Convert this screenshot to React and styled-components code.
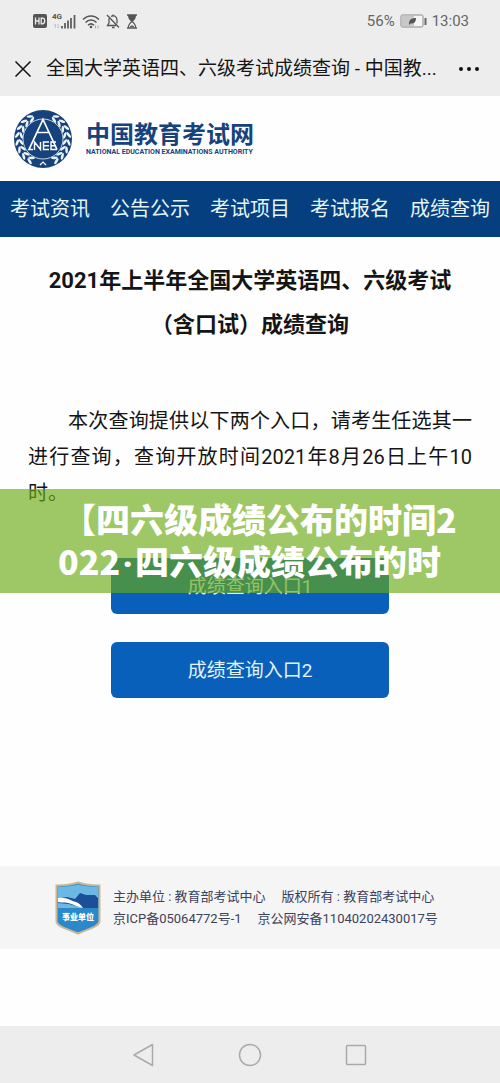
import React from "react";
import styled, { createGlobalStyle } from "styled-components";

const navLinks = ["考试资讯", "公告公示", "考试项目", "考试报名", "成绩查询"];
const entries = ["成绩查询入口1", "成绩查询入口2"];
const leafAngles = [30, 47, 64, 81, 98, 115, 132, 149];

const SignalIcons = () => (
    <Icons>
        <svg width="14" height="14" viewBox="0 0 14 14">
            <rect width="14" height="14" rx="2" fill="#555" />
            <path d="M2.5 3.5v7M6 3.5v7M2.5 7H6M8.2 4.2v5.6h1.2c1.6 0 2.3-1 2.3-2.8s-.7-2.8-2.3-2.8z" fill="none" stroke="#eee" strokeWidth="1.3" />
        </svg>
        <Signal>
            <Network>4G</Network>
            <svg width="23" height="15" viewBox="0 0 23 15">
                <path d="M2.5 10v4M1 11.5 2.5 10M5 10v4l1.3-1.500" fill="none" stroke="#c4c4c4" />
                <path d="M9 12v2.500M12 9v5.500M15 6.500v8M18 4v10.500M21.500 1v13.500" stroke="#5e5e5e" strokeWidth="1.800" />
            </svg>
        </Signal>
        <svg width="18" height="15" viewBox="0 0 18 15" fill="none" stroke="#555" strokeWidth="1.500">
            <path d="M1 5.500c4.500-4.800 11.500-4.800 16 0M3.500 8.500c3-3.300 8-3.300 11 0M6 11.300c1.800-1.800 4.200-1.800 6 0" />
            <circle cx="9" cy="13" r="1.300" fill="#555" stroke="none" />
            <path d="M13.500 11.500v3M16 11.500v3" stroke="#aaa" strokeWidth="1" />
        </svg>
        <svg width="14" height="15" viewBox="0 0 14 15" fill="none" stroke="#555" strokeWidth="1.300">
            <path d="M1 1l12 12.500M5 2.500c3-1.800 6 0 6 3.500v3.500M3 4.500V9l-1.500 2.500H10M6 13.500h2.500M7 .5v1.500" />
        </svg>
        <svg width="12" height="15" viewBox="0 0 12 15">
            <path d="M1 1h10M1 14h10" stroke="#555" strokeWidth="1.600" />
            <path d="M2 1h8c0 3-1 4.500-3 6.500H5C3 5.500 2 4 2 1z" fill="#555" />
            <path d="M2.300 14c0-3 1-4.500 3.700-6.500C8.700 9.500 9.700 11 9.700 14" fill="none" stroke="#555" strokeWidth="1.200" />
            <path d="M4 13c0-2 4-2 4 0z" fill="#555" />
        </svg>
    </Icons>
);

const BatteryIcon = () => (
    <svg width="27" height="14" viewBox="0 0 27 14">
        <rect x="1" y="1" width="22" height="12" rx="1.500" fill="#f4f4f4" stroke="#888" />
        <rect x="2" y="2" width="12" height="10" fill="#c8c8c8" />
        <path d="M9 10c0-4 2-6 7-6 0 4-2 6-5.500 5.500L9 11z" fill="#555" />
        <path d="M25.500 4v7" stroke="#666" strokeWidth="2" />
    </svg>
);

const Emblem = () => (
    <svg width="58" height="58" viewBox="0 0 58 58">
        <circle cx="29" cy="29" r="29" fill="#16427d" />
        {leafAngles.map((angle) => (
            <g key={angle} fill="#eef4f8">
                {[angle, -angle].map((a) => (
                    <g key={a} transform={`rotate(${a} 29 29)`}>
                        <ellipse cx="29" cy="3" rx="3.400" ry="1.300" transform={`rotate(${a > 0 ? -28 : 28} 29 3)`} />
                        <ellipse cx="29" cy="7" rx="3.400" ry="1.300" transform={`rotate(${a > 0 ? 28 : -28} 29 7)`} />
                    </g>
                ))}
            </g>
        ))}
        <circle cx="29" cy="29" r="20" fill="#16427d" stroke="#c5d4e2" strokeWidth="1" />
        <g fill="none" stroke="#fff">
            <path d="M19 39.500h-4L29 9.500l14 30M23.500 22.500h11" strokeWidth="1.700" />
            <path d="M20.500 40v-8l6 7.500V32M35 32h-5.500v7.500H35M29.500 35.700H35M42 32h-5v7.500h6M37 35.700h5" strokeWidth="1.400" />
            <path d="M26 55l3-3 3 3" strokeWidth="1.200" />
        </g>
    </svg>
);

const Shield = () => (
    <svg width="46" height="54" viewBox="0 0 46 54">
        <path d="M1.500 4.500C9 4.500 17 3.500 23 1.500c6 2 14 3 21.500 3V40c0 6-12 8-21.500 12.500C13.500 48 1.500 46 1.500 40z" fill="#2b88c9" stroke="#c9b995" strokeWidth="2" />
        <path d="M3 6c8 0 15-1 20-2.500C28 5 35 6 43 6v21H3z" fill="#6bb8e5" />
        <path d="M3 17.500 12 16l8 2 5-6 6 2 9 0 3 3v10H28L14 23 3 22z" fill="#1c4f97" />
        <path d="M3 17c9-1 13 3 18 4 3 1 5 3 7 6-6-1-10-4-15-5-4-1-7 0-10-1z" fill="#fff" />
        <text x="23" y="39" textAnchor="middle" fill="#fff" fontSize="8" fontWeight="900">事业单位</text>
    </svg>
);

const App = () => {
    return (
        <Page>
            <GlobalStyle />
            <Top>
                <StatusBar>
                    <SignalIcons />
                    <Power>
                        56%
                        <BatteryIcon />
                        13:03
                    </Power>
                </StatusBar>
                <TitleBar>
                    <IconButton aria-label="关闭">
                        <svg width="16" height="16" viewBox="0 0 16 16">
                            <path d="M.5.5l15 15M15.500.5l-15 15" stroke="#111" strokeWidth="1.500" />
                        </svg>
                    </IconButton>
                    <PageName>全国大学英语四、六级考试成绩查询 - 中国教...</PageName>
                    <IconButton aria-label="更多">
                        <svg width="22" height="6" viewBox="0 0 22 6" fill="#111">
                            <circle cx="3" cy="3" r="2" />
                            <circle cx="11" cy="3" r="2" />
                            <circle cx="19" cy="3" r="2" />
                        </svg>
                    </IconButton>
                </TitleBar>
            </Top>
            <Brand>
                <Emblem />
                <BrandText>
                    <BrandName>中国教育考试网</BrandName>
                    <BrandEnglish>NATIONAL EDUCATION EXAMINATIONS AUTHORITY</BrandEnglish>
                </BrandText>
            </Brand>
            <Nav>
                {navLinks.map((name) => (
                    <NavLink href="#" key={name}>{name}</NavLink>
                ))}
            </Nav>
            <Main>
                <Title>2021年上半年全国大学英语四、六级考试<br />（含口试）成绩查询</Title>
                <Notice>本次查询提供以下两个入口，请考生任选其一进行查询，查询开放时间2021年8月26日上午10时。</Notice>
                <Entries>
                    {entries.map((name) => (
                        <EntryButton key={name}>{name}</EntryButton>
                    ))}
                </Entries>
                <Banner>
                    <BannerLine $first>【四六级成绩公布的时间2</BannerLine>
                    <BannerLine>022<Dot>·</Dot>四六级成绩公布的时</BannerLine>
                </Banner>
            </Main>
            <Footer>
                <Shield />
                <FooterText>
                    <FooterRow>
                        <span>主办单位 : 教育部考试中心</span>
                        <span>版权所有 : 教育部考试中心</span>
                    </FooterRow>
                    <FooterRow>
                        <span>京ICP备05064772号-1</span>
                        <span>京公网安备11040202430017号</span>
                    </FooterRow>
                </FooterText>
            </Footer>
            <SystemNav>
                <IconButton aria-label="返回">
                    <svg width="24" height="24" viewBox="0 0 24 24" fill="none" stroke="#aaa" strokeWidth="1.500" strokeLinejoin="round">
                        <path d="M20.500 1.500v21L2 12z" />
                    </svg>
                </IconButton>
                <IconButton aria-label="主页">
                    <svg width="24" height="24" viewBox="0 0 24 24" fill="none" stroke="#aaa" strokeWidth="1.500">
                        <circle cx="12" cy="12" r="10.500" />
                    </svg>
                </IconButton>
                <IconButton aria-label="最近任务">
                    <svg width="24" height="24" viewBox="0 0 24 24" fill="none" stroke="#aaa" strokeWidth="1.500">
                        <rect x="2.500" y="2.500" width="19" height="19" rx="1" />
                    </svg>
                </IconButton>
            </SystemNav>
        </Page>
    );
};

export default App;

const GlobalStyle = createGlobalStyle`
    * {
        box-sizing: border-box;
    }
    body {
        margin: 0;
        background: #fefefe;
        color: #151515;
        font-family: Roboto, "Noto Sans CJK SC", sans-serif;
    }
    button {
        padding: 0;
        border: 0;
        background: none;
        font-family: inherit;
    }
    svg {
        display: block;
        flex: none;
    }
`;
const Page = styled.div`
    display: flex;
    flex-direction: column;
    min-height: 100vh;
`;
const Top = styled.header`
    background: #ededed;
`;
const StatusBar = styled.div`
    display: flex;
    align-items: center;
    justify-content: space-between;
    height: 42px;
    padding: 0 31px 0 33px;
`;
const Icons = styled.div`
    display: flex;
    align-items: center;
    gap: 6px;
`;
const Signal = styled.div`
    position: relative;
`;
const Network = styled.span`
    position: absolute;
    top: -1px;
    left: -1px;
    color: #555;
    font-size: 8px;
    font-weight: 700;
    line-height: 8px;
`;
const Power = styled.div`
    display: flex;
    align-items: center;
    gap: 5px;
    color: #666;
    font-size: 15px;
    line-height: 20px;
`;
const TitleBar = styled.div`
    display: flex;
    align-items: center;
    height: 54px;
    padding: 0 20px 0 15px;
`;
const IconButton = styled.button`
    display: flex;
    align-items: center;
    justify-content: center;
`;
const PageName = styled.div`
    flex: 1;
    padding-left: 15px;
    font-size: 19px;
    line-height: 28px;
    white-space: nowrap;
`;
const Brand = styled.div`
    display: flex;
    align-items: center;
    gap: 14px;
    height: 85px;
    padding: 0 14px;
`;
const BrandText = styled.div`
    color: #16427d;
`;
const BrandName = styled.div`
    font-family: "Noto Sans CJK SC", sans-serif;
    font-size: 24px;
    font-weight: 700;
    line-height: 24px;
`;
const BrandEnglish = styled.div`
    padding-top: 2px;
    font-family: Roboto, sans-serif;
    font-size: 7px;
    font-weight: 700;
    line-height: 10px;
    white-space: nowrap;
`;
const Nav = styled.nav`
    display: flex;
    justify-content: space-between;
    padding: 0 10px;
    background: #053f80;
`;
const NavLink = styled.a`
    color: #e6f4f6;
    font-size: 20px;
    line-height: 56px;
    text-decoration: none;
`;
const Main = styled.main`
    position: relative;
    flex: 1;
    padding-top: 22px;
`;
const Title = styled.h1`
    margin: 0;
    font-size: 22px;
    font-weight: 700;
    line-height: 44px;
    text-align: center;
`;
const Notice = styled.p`
    margin: 56px 28px 0;
    font-size: 20px;
    line-height: 36px;
    text-align: justify;
    text-indent: 2em;
`;
const Entries = styled.div`
    display: flex;
    flex-direction: column;
    align-items: center;
    gap: 28px;
    margin: 47px 0 160px;
`;
const EntryButton = styled.button`
    width: 278px;
    height: 56px;
    padding-bottom: 4px;
    border-radius: 6px;
    background: #0860bb;
    color: #e4f3f8;
    font-size: 19px;
`;
const Banner = styled.div`
    position: absolute;
    top: 252px;
    left: 0;
    right: 0;
    padding: 9px 0 11px 58px;
    background: rgba(106, 169, 18, 0.65);
`;
const BannerLine = styled.div`
    padding-left: ${(props) => (props.$first ? "4px" : "0")};
    color: #fff;
    font-family: "Noto Sans CJK SC", sans-serif;
    font-size: 34px;
    font-weight: 900;
    line-height: 42px;
    white-space: nowrap;
`;
const Dot = styled.span`
    padding: 0 2px;
    font-family: Roboto, sans-serif;
    line-height: 1;
`;
const Footer = styled.footer`
    display: flex;
    align-items: center;
    gap: 12px;
    height: 83px;
    margin-bottom: 77px;
    padding-left: 55px;
    background: #f5f5f5;
`;
const FooterText = styled.div`
    color: #3b425c;
    font-size: 13px;
    line-height: 22px;
`;
const FooterRow = styled.div`
    display: flex;
    gap: 16px;
`;
const SystemNav = styled.div`
    display: flex;
    align-items: center;
    justify-content: center;
    gap: 82px;
    height: 57px;
    background: #ededed;
`;
